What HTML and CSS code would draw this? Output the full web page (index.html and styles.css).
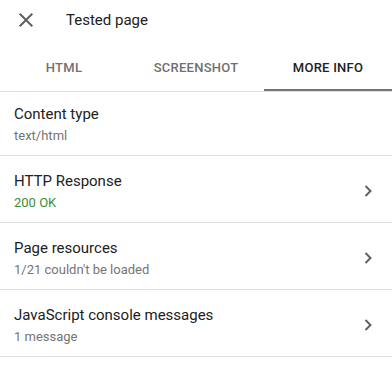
FILE: index.html
```html
<!DOCTYPE html>
<html lang="en">
<head>
  <meta charset="UTF-8">
  <meta name="viewport" content="width=device-width, initial-scale=1.0">
  <title>Tested page</title>
  <link rel="stylesheet" href="styles.css">
</head>
<body>
  <div class="header">
    <svg class="close" viewBox="0 0 24 24">
      <path d="M19 6.41L17.59 5 12 10.59 6.41 5 5 6.41 10.59 12 5 17.59 6.41 19 12 13.41 17.59 19 19 17.59 13.41 12z"/>
    </svg>
    <div class="title">Tested page</div>
  </div>

  <div class="tabs">
    <div class="tab">HTML</div>
    <div class="tab">Screenshot</div>
    <div class="tab active">More info</div>
  </div>

  <div class="list">
    <div class="row first">
      <div class="text">
        <div class="label">Content type</div>
        <div class="value">text/html</div>
      </div>
    </div>
    <div class="row">
      <div class="text">
        <div class="label">HTTP Response</div>
        <div class="value ok">200 OK</div>
      </div>
      <svg class="chevron" viewBox="0 0 24 24"><polyline points="9.5,7 14.5,12 9.5,17"/></svg>
    </div>
    <div class="row">
      <div class="text">
        <div class="label">Page resources</div>
        <div class="value">1/21 couldn't be loaded</div>
      </div>
      <svg class="chevron" viewBox="0 0 24 24"><polyline points="9.5,7 14.5,12 9.5,17"/></svg>
    </div>
    <div class="row">
      <div class="text">
        <div class="label">JavaScript console messages</div>
        <div class="value">1 message</div>
      </div>
      <svg class="chevron" viewBox="0 0 24 24"><polyline points="9.5,7 14.5,12 9.5,17"/></svg>
    </div>
  </div>
</body>
</html>
```

FILE: styles.css
```css
body {
  margin: 0;
  font-family: Roboto, 'Noto Sans', sans-serif;
  background: #fff;
  color: #212121;
}

.header {
  display: flex;
  align-items: flex-start;
  height: 43px;
  box-sizing: border-box;
  padding: 8px 0 0 14px;
}

.close {
  width: 24px;
  height: 24px;
  fill: #616161;
  flex-shrink: 0;
}

.title {
  margin-left: 28px;
  font-size: 15px;
  line-height: 24px;
  color: #212121;
}

.tabs {
  display: grid;
  grid-template-columns: 128px 128px 128px;
  justify-content: space-between;
  border-bottom: 1px solid #e0e0e0;
}

.tab {
  height: 48px;
  box-sizing: border-box;
  display: flex;
  align-items: center;
  justify-content: center;
  font-size: 13px;
  font-weight: 500;
  text-transform: uppercase;
  letter-spacing: 0.25px;
  color: #707070;
  border-bottom: 2px solid transparent;
  padding-top: 2px;
}

.tab.active {
  color: #212121;
  border-bottom-color: #757575;
}

.row {
  display: flex;
  align-items: center;
  padding: 13px 12px 9px 14px;
  border-bottom: 1px solid #e0e0e0;
}

.row.first {
  padding-top: 10px;
}

.text {
  flex: 1;
}

.label {
  font-size: 15px;
  line-height: 24px;
  color: #212121;
}

.value {
  font-size: 13px;
  line-height: 20px;
  color: #757575;
}

.value.ok {
  color: #388e3c;
}

.chevron {
  width: 24px;
  height: 24px;
  fill: none;
  stroke: #616161;
  stroke-width: 2;
}
```
